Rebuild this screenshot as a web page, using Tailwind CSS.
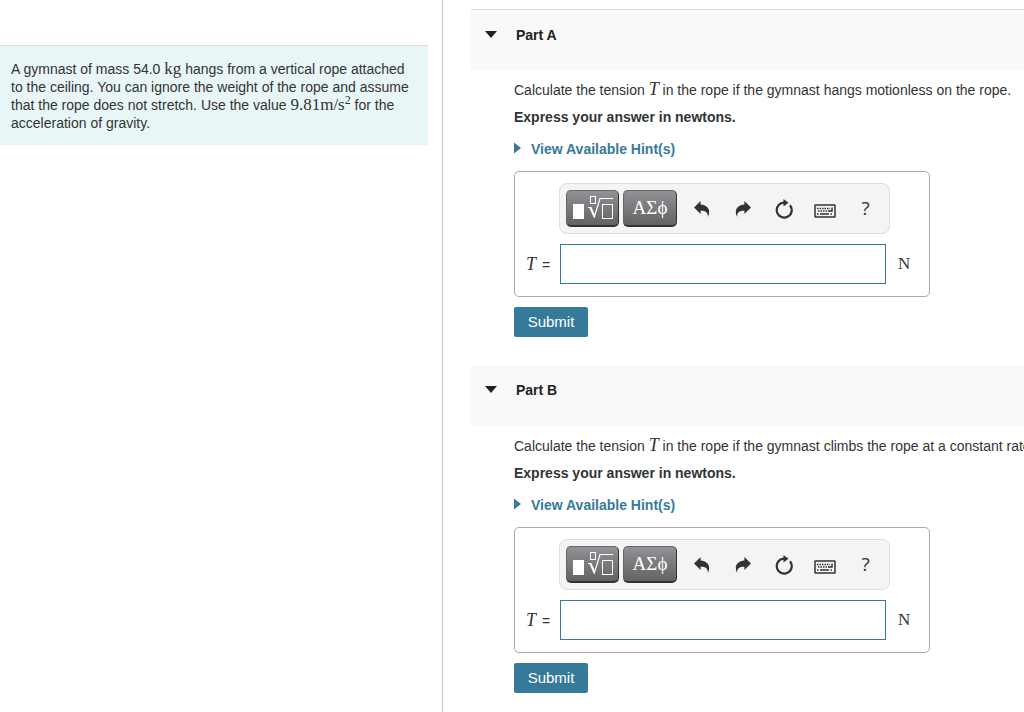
<!DOCTYPE html>
<html lang="en">
<head>
  <meta charset="UTF-8">
  <meta name="viewport" content="width=device-width, initial-scale=1.0">
  <title>Gymnast on a Rope</title>
  <script src="https://cdn.jsdelivr.net/npm/@tailwindcss/browser@4"></script>
</head>
<body class="bg-white text-[#333] text-[14px] font-['Liberation_Sans',Arial,sans-serif]">
  <!-- Shared icons -->
  <svg class="hidden">
    <symbol id="icon-template" viewBox="0 0 42 26">
      <rect x="1" y="9" width="11" height="15" fill="#fff"/>
      <rect x="18.5" y="1.500" width="5" height="7" fill="none" stroke="#fff"/>
      <path d="M16 12.500h2.300l4 9.500L28 3.500h13" fill="none" stroke="#fff" stroke-width="1.200"/>
      <path d="M18.500 12.500l4 9" stroke="#fff" stroke-width="2"/>
      <rect x="30.500" y="9.500" width="10" height="14" fill="none" stroke="#fff"/>
    </symbol>
    <symbol id="icon-undo" viewBox="0 0 16 16">
      <path d="M0 6.500L6.600 0v3.600C12 4 15.300 7.200 15.200 11c0 1.700-.5 3.400-1.300 5 .1-4.300-2-6.200-7.300-6.200V13z" fill="#333"/>
    </symbol>
    <symbol id="icon-reset" viewBox="0 0 18 20">
      <path d="M9.500 3.600A7.500 7.500 0 1 0 15 6.300" fill="none" stroke="#333" stroke-width="2.200"/>
      <path d="M8.500 0l5 3.800-5 3.800z" fill="#333"/>
    </symbol>
    <symbol id="icon-keyboard" viewBox="0 0 22 14">
      <rect x="1" y="1" width="20" height="12" rx=".5" fill="none" stroke="#333" stroke-width="1.500"/>
      <path d="M3 4.500h13M4 7h12" stroke="#333" stroke-width="1.500" stroke-dasharray="1.500 1"/>
      <path d="M3 10h1.500M6 10h9M16.500 10H18M15 7h3V3.500" fill="none" stroke="#333" stroke-width="1.500"/>
    </symbol>
  </svg>

  <div class="flex min-h-screen overflow-hidden">
    <!-- Problem statement -->
    <aside class="w-[443px] shrink-0 border-r border-[#b5c7dc] pt-[45px] pr-[14px]">
      <div class="bg-[#e9f6f7] border-t border-[#dcdcdc] pt-[14px] pb-[13px] pl-[11px] pr-4">
        <p class="leading-[18px]">A gymnast of mass 54.0 <span class="font-['Liberation_Serif',serif] text-[17px] leading-[18px]">kg</span> hangs from a vertical rope attached<br>
          to the ceiling. You can ignore the weight of the rope and assume<br>
          that the rope does not stretch. Use the value <span class="font-['Liberation_Serif',serif] text-[17px] leading-[18px]">9.81m/s<sup class="text-[12px]">2</sup></span> for the<br>
          acceleration of gravity.</p>
      </div>
    </aside>

    <!-- Parts -->
    <main class="flex-1 min-w-0 pt-[9px] pl-7">
      <section>
        <div class="h-[61px] flex items-start bg-[#f9f9f9] border-t border-[#dcdcdc] pt-[15px] pl-[14px]">
          <button type="button" aria-label="Collapse Part A" class="w-[31px] h-[18px]">
            <svg class="w-3 h-[7px]" viewBox="0 0 12 7"><path d="M0 0h12L6 7z" fill="#222"/></svg>
          </button>
          <h2 class="leading-5 font-bold text-[#222]">Part A</h2>
        </div>
        <div class="pl-[43px] pt-[9px] pb-7">
          <p class="leading-5 whitespace-nowrap">Calculate the tension <i class="font-['Liberation_Serif',serif] text-[18px] leading-5">T</i> in the rope if the gymnast hangs motionless on the rope.</p>
          <p class="leading-5 mt-[7px] font-bold">Express your answer in newtons.</p>
          <a href="#" class="flex items-center gap-[10px] mt-3 leading-5 font-bold text-[#367a9b]">
            <svg class="w-[7px] h-3 mb-[3px]" viewBox="0 0 7 12"><path d="M0 0.500L7 6 0 11.500z" fill="currentColor"/></svg>View Available Hint(s)</a>
          <div class="w-[416px] mt-3 border border-[#aaa] rounded-[5px] pt-[11px] pb-3">
            <div class="flex items-center w-[331px] h-[51px] ml-11 pl-[6px] bg-[#f4f4f4] border border-[#ddd] rounded-lg">
              <button type="button" aria-label="Templates" class="w-[53px] h-[37px] mr-1 grid place-items-center rounded-[5px] border border-[#666] border-r-[#333] border-b-2 border-b-[#333] bg-linear-to-b from-[#929297] to-[#636363]">
                <svg class="w-[42px] h-[26px]"><use href="#icon-template"/></svg>
              </button>
              <button type="button" aria-label="Symbols" class="w-[54px] h-[37px] mr-1 rounded-[5px] border border-[#666] border-r-[#333] border-b-2 border-b-[#333] bg-linear-to-b from-[#929297] to-[#636363] text-white text-[19px] leading-8 font-['Liberation_Serif',serif]">ΑΣϕ</button>
              <button type="button" aria-label="Undo" class="w-[41px] h-9 grid place-items-center"><svg class="w-4 h-4"><use href="#icon-undo"/></svg></button>
              <button type="button" aria-label="Redo" class="w-[41px] h-9 grid place-items-center"><svg class="w-4 h-4 -scale-x-100"><use href="#icon-undo"/></svg></button>
              <button type="button" aria-label="Reset" class="w-[41px] h-9 grid place-items-center"><svg class="w-[18px] h-5"><use href="#icon-reset"/></svg></button>
              <button type="button" aria-label="Keyboard" class="w-[41px] h-9 pt-1 grid place-items-center"><svg class="w-[22px] h-[14px]"><use href="#icon-keyboard"/></svg></button>
              <button type="button" aria-label="Help" class="w-[41px] h-9 text-[19px] font-['Open_Sans',sans-serif]">?</button>
            </div>
            <div class="flex items-center mt-[10px]">
              <label for="answer-a" class="w-[45px] pl-[11px]"><i class="font-['Liberation_Serif',serif] text-[18px] mr-[2px]">T</i> =</label>
              <input type="text" id="answer-a" class="w-[326px] h-10 px-2 bg-white border border-[#367a9b] outline-none">
              <span class="ml-3 font-['Liberation_Serif',serif] text-[17px]">N</span>
            </div>
          </div>
          <button type="button" class="block w-[74px] h-[30px] mt-[10px] rounded-[2px] bg-[#367a9b] text-white text-[15px]">Submit</button>
        </div>
      </section>

      <section>
        <div class="h-[60px] flex items-start bg-[#f9f9f9] pt-[15px] pl-[14px]">
          <button type="button" aria-label="Collapse Part B" class="w-[31px] h-[18px]">
            <svg class="w-3 h-[7px]" viewBox="0 0 12 7"><path d="M0 0h12L6 7z" fill="#222"/></svg>
          </button>
          <h2 class="leading-5 font-bold text-[#222]">Part B</h2>
        </div>
        <div class="pl-[43px] pt-[10px]">
          <p class="leading-5 whitespace-nowrap">Calculate the tension <i class="font-['Liberation_Serif',serif] text-[18px] leading-5">T</i> in the rope if the gymnast climbs the rope at a constant rate</p>
          <p class="leading-5 mt-[7px] font-bold">Express your answer in newtons.</p>
          <a href="#" class="flex items-center gap-[10px] mt-3 leading-5 font-bold text-[#367a9b]">
            <svg class="w-[7px] h-3 mb-[3px]" viewBox="0 0 7 12"><path d="M0 0.500L7 6 0 11.500z" fill="currentColor"/></svg>View Available Hint(s)</a>
          <div class="w-[416px] mt-3 border border-[#aaa] rounded-[5px] pt-[11px] pb-3">
            <div class="flex items-center w-[331px] h-[51px] ml-11 pl-[6px] bg-[#f4f4f4] border border-[#ddd] rounded-lg">
              <button type="button" aria-label="Templates" class="w-[53px] h-[37px] mr-1 grid place-items-center rounded-[5px] border border-[#666] border-r-[#333] border-b-2 border-b-[#333] bg-linear-to-b from-[#929297] to-[#636363]">
                <svg class="w-[42px] h-[26px]"><use href="#icon-template"/></svg>
              </button>
              <button type="button" aria-label="Symbols" class="w-[54px] h-[37px] mr-1 rounded-[5px] border border-[#666] border-r-[#333] border-b-2 border-b-[#333] bg-linear-to-b from-[#929297] to-[#636363] text-white text-[19px] leading-8 font-['Liberation_Serif',serif]">ΑΣϕ</button>
              <button type="button" aria-label="Undo" class="w-[41px] h-9 grid place-items-center"><svg class="w-4 h-4"><use href="#icon-undo"/></svg></button>
              <button type="button" aria-label="Redo" class="w-[41px] h-9 grid place-items-center"><svg class="w-4 h-4 -scale-x-100"><use href="#icon-undo"/></svg></button>
              <button type="button" aria-label="Reset" class="w-[41px] h-9 grid place-items-center"><svg class="w-[18px] h-5"><use href="#icon-reset"/></svg></button>
              <button type="button" aria-label="Keyboard" class="w-[41px] h-9 pt-1 grid place-items-center"><svg class="w-[22px] h-[14px]"><use href="#icon-keyboard"/></svg></button>
              <button type="button" aria-label="Help" class="w-[41px] h-9 text-[19px] font-['Open_Sans',sans-serif]">?</button>
            </div>
            <div class="flex items-center mt-[10px]">
              <label for="answer-b" class="w-[45px] pl-[11px]"><i class="font-['Liberation_Serif',serif] text-[18px] mr-[2px]">T</i> =</label>
              <input type="text" id="answer-b" class="w-[326px] h-10 px-2 bg-white border border-[#367a9b] outline-none">
              <span class="ml-3 font-['Liberation_Serif',serif] text-[17px]">N</span>
            </div>
          </div>
          <button type="button" class="block w-[74px] h-[30px] mt-[10px] rounded-[2px] bg-[#367a9b] text-white text-[15px]">Submit</button>
        </div>
      </section>
    </main>
  </div>
</body>
</html>
